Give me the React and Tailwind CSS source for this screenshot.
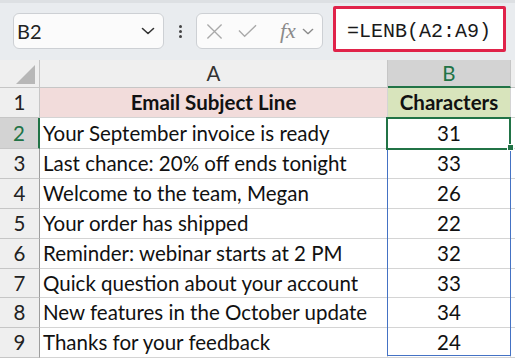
import React from 'react';

const rows = [
    ['Your September invoice is ready', 31],
    ['Last chance: 20% off ends tonight', 33],
    ['Welcome to the team, Megan', 26],
    ['Your order has shipped', 22],
    ['Reminder: webinar starts at 2 PM', 32],
    ['Quick question about your account', 33],
    ['New features in the October update', 34],
    ['Thanks for your feedback', 24],
];

const rowHeights = ['h-[31px]', 'h-[30px]', 'h-[30px]', 'h-[30px]', 'h-[30px]', 'h-[29px]', 'h-[30px]', 'h-[30px]'];

const Chevron = ({ className }) => (
    <svg viewBox="0 0 14 8" className={className} fill="none" stroke="currentColor" strokeWidth="1.6" strokeLinecap="round" strokeLinejoin="round">
        <path d="M1.5 1.5 L7 6.5 L12.5 1.5" />
    </svg>
);

const Toolbar = () => (
    <div className="h-[60px] bg-[#e9ecef] border-t-[3px] border-[#dde0e3] flex items-start pt-[10px] pl-[13px]">
        <div className="w-[151px] h-[36px] bg-[#fbfbfb] border border-[#cdd0d4] rounded-[6px] flex items-center pl-[3px] pr-[8px]">
            <span className="text-[20px] text-[#222] leading-none">B2</span>
            <Chevron className="w-[14px] h-[8px] ml-auto text-[#333]" />
        </div>
        <div className="w-[32px] h-[36px] flex flex-col items-center justify-center gap-[2px]">
            <span className="w-[3px] h-[3px] rounded-full bg-[#444]" />
            <span className="w-[3px] h-[3px] rounded-full bg-[#444]" />
            <span className="w-[3px] h-[3px] rounded-full bg-[#444]" />
        </div>
        <div className="w-[127px] h-[36px] bg-[#fbfbfb] border border-[#cdd0d4] rounded-[6px] flex items-center pl-[9px]">
            <svg viewBox="0 0 18 18" className="w-[17px] h-[17px] text-[#a9a9a9]" fill="none" stroke="currentColor" strokeWidth="1.4">
                <path d="M1.5 1.5 L16.5 16.5 M16.5 1.5 L1.5 16.5" />
            </svg>
            <svg viewBox="0 0 20 14" className="w-[19px] h-[14px] ml-[15px] text-[#a9a9a9]" fill="none" stroke="currentColor" strokeWidth="1.4">
                <path d="M1 6.5 L7 12.5 L19 1" />
            </svg>
            <span className="ml-[23px] text-[22px] italic text-[#8a8a8a] leading-none" style={{ fontFamily: '"Liberation Serif", serif' }}>fx</span>
            <Chevron className="w-[12px] h-[7px] ml-[6px] text-[#8a8a8a]" />
        </div>
        <div className="ml-[10px] -mt-[7px] w-[173px] h-[46px] bg-white border-[3px] border-[#e0234a] rounded-[2px] flex items-center pl-[11px] pt-[6px]">
            <span className="text-[20px] text-[#1a1a1a] leading-none" style={{ fontFamily: '"Liberation Mono", monospace' }}>=LENB(A2:A9)</span>
        </div>
    </div>
);

export default function App() {
    return (
        <div className="w-[515px] h-[358px] overflow-hidden bg-white" style={{ fontFamily: 'Lato, "Noto Sans", sans-serif' }}>
            <Toolbar />
            <div className="relative">
                <div className="grid grid-cols-[40px_348px_123px_4px] text-[20.5px] text-[#111]">
                    {/* column headers */}
                    <div className="h-[28px] bg-[#efefef] border-r border-b border-[#c6c6c6] flex items-end justify-end pr-[4px] pb-[3px]">
                        <svg viewBox="0 0 20 20" className="w-[19px] h-[19px]">
                            <path d="M20 0 L20 20 L0 20 Z" fill="#b7b7b7" />
                        </svg>
                    </div>
                    <div className="h-[28px] bg-[#efefef] border-r border-b border-[#c6c6c6] flex items-center justify-center text-[#333]">A</div>
                    <div className="h-[28px] bg-[#d3d3d3] border-r border-[#c6c6c6] border-b-2 border-b-[#217346] flex items-center justify-center text-[#217346]">B</div>
                    <div className="h-[28px] bg-[#efefef] border-b border-[#c6c6c6]" />

                    {/* row 1 */}
                    <div className="h-[30px] bg-[#efefef] border-r border-b border-[#c6c6c6] flex items-center justify-center text-[#222]">1</div>
                    <div className="h-[30px] bg-[#f2dcdb] border-r border-b border-[#d4d4d4] flex items-center justify-center font-bold">Email Subject Line</div>
                    <div className="h-[30px] bg-[#d8e4bc] border-r border-b border-[#d4d4d4] flex items-center justify-center font-bold">Characters</div>
                    <div className="h-[30px] border-b border-[#d4d4d4]" />

                    {rows.map(([subject, count], i) => {
                        const selected = i === 0;
                        return (
                            <React.Fragment key={subject}>
                                <div className={`${rowHeights[i]} border-b border-[#c6c6c6] flex items-center justify-center ${selected ? 'bg-[#d3d3d3] text-[#217346] border-r-2 border-r-[#217346]' : 'bg-[#efefef] text-[#222] border-r border-r-[#9e9e9e]'}`}>
                                    {i + 2}
                                </div>
                                <div className={`${rowHeights[i]} border-r border-b border-[#d4d4d4] flex items-center pl-[3px] whitespace-nowrap`}>
                                    {subject}
                                </div>
                                <div className={`${rowHeights[i]} border-r border-b border-[#d4d4d4] flex items-center justify-center`}>
                                    {count}
                                </div>
                                <div className={`${rowHeights[i]} border-b border-[#d4d4d4]`} />
                            </React.Fragment>
                        );
                    })}
                </div>

                {/* spill range outline */}
                <div className="absolute left-[387px] top-[58px] w-[124px] h-[238px] border-[1.5px] border-[#4472c4] pointer-events-none" />
                {/* active cell */}
                <div className="absolute left-[386px] top-[57px] w-[125px] h-[33px] border-2 border-[#217346] pointer-events-none" />
                <div className="absolute left-[507px] top-[84px] w-[7px] h-[7px] bg-[#217346] border border-white pointer-events-none" />
            </div>
        </div>
    );
}
